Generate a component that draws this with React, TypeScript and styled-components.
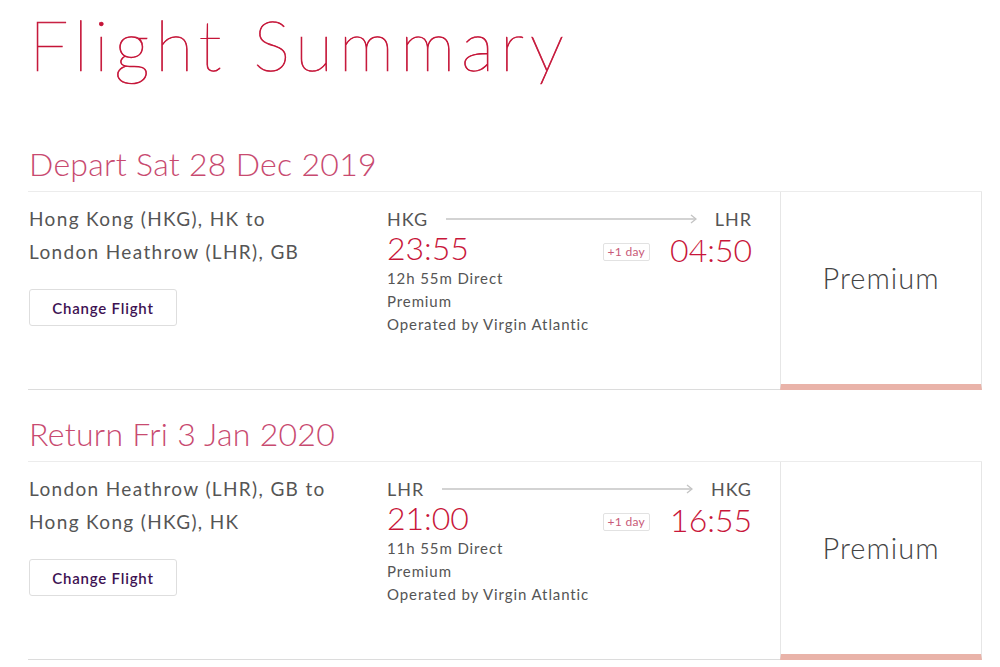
import styled, { createGlobalStyle } from "styled-components";

const GlobalStyle = createGlobalStyle`
  body {
    margin: 0;
    background: #fff;
    font-family: Lato, "Noto Sans", sans-serif;
    color: #555;
  }
`;

interface Flight {
  heading: string;
  fromName: string;
  toName: string;
  from: string;
  to: string;
  depart: string;
  arrive: string;
  duration: string;
}

const flights: Flight[] = [
  {
    heading: "Depart Sat 28 Dec 2019",
    fromName: "Hong Kong (HKG), HK to",
    toName: "London Heathrow (LHR), GB",
    from: "HKG",
    to: "LHR",
    depart: "23:55",
    arrive: "04:50",
    duration: "12h 55m Direct",
  },
  {
    heading: "Return Fri 3 Jan 2020",
    fromName: "London Heathrow (LHR), GB to",
    toName: "Hong Kong (HKG), HK",
    from: "LHR",
    to: "HKG",
    depart: "21:00",
    arrive: "16:55",
    duration: "11h 55m Direct",
  },
];

export default function App() {
  return <>
    <GlobalStyle />
    <Page>
      <Title>Flight Summary</Title>
      {flights.map(f => <FlightSection key={f.heading} flight={f} />)}
    </Page>
  </>;
}

function FlightSection({ flight }: { flight: Flight }) {
  return <Section>
    <Heading>{flight.heading}</Heading>
    <Card>
      <Route>
        <RouteLine>{flight.fromName}</RouteLine>
        <RouteLine>{flight.toName}</RouteLine>
        <ChangeButton>Change Flight</ChangeButton>
      </Route>
      <Details>
        <Airports>
          <Code>{flight.from}</Code>
          <Arrow>
            <svg width="100%" height="10" preserveAspectRatio="none" viewBox="0 0 100 10">
              <line x1="0" y1="5" x2="99.5" y2="5" stroke="#c4c4c4" strokeWidth="1.3" vectorEffect="non-scaling-stroke" />
            </svg>
            <ArrowHead width="7" height="10" viewBox="0 0 7 10">
              <path d="M1 1 L6 5 L1 9" fill="none" stroke="#c4c4c4" strokeWidth="1.3" />
            </ArrowHead>
          </Arrow>
          <Code>{flight.to}</Code>
        </Airports>
        <Times>
          <Time>{flight.depart}</Time>
          <ArriveGroup>
            <DayBadge>+1 day</DayBadge>
            <Time $late>{flight.arrive}</Time>
          </ArriveGroup>
        </Times>
        <Info>{flight.duration}</Info>
        <Info>Premium</Info>
        <Info>Operated by Virgin Atlantic</Info>
      </Details>
      <CabinBox>
        <CabinName>Premium</CabinName>
      </CabinBox>
    </Card>
  </Section>;
}

const Page = styled.div`
  padding: 2px 18px 0 28px;
`;

const Title = styled.h1`
  margin: 0 0 0 1px;
  font-family: Lato, sans-serif;
  font-weight: 100;
  font-size: 70px;
  line-height: 84px;
  color: #c51538;
  letter-spacing: 5.8px;
  -webkit-text-stroke: 0.7px #c51538;
`;

const Section = styled.section`
  display: flex;
  flex-direction: column;
`;

const Heading = styled.h2`
  margin: 56px 0 0 1px;
  padding-bottom: 5px;
  font-weight: 300;
  font-size: 32px;
  line-height: 44px;
  color: #c84a70;
  letter-spacing: 0.3px;
  ${Section} + ${Section} & {
    margin-top: 22px;
  }
`;

const Card = styled.div`
  display: grid;
  grid-template-columns: 359px 1fr 202px;
  box-sizing: border-box;
  height: 199px;
  border-top: 1px solid #ececec;
  border-bottom: 1px solid #dcdcdc;
`;

const Route = styled.div`
  display: flex;
  flex-direction: column;
  align-items: flex-start;
  padding-top: 10px;
  padding-left: 1px;
`;

const RouteLine = styled.div`
  font-size: 19px;
  line-height: 33px;
  color: #555;
  letter-spacing: 1.35px;
`;

const ChangeButton = styled.button`
  margin-top: 21px;
  width: 148px;
  height: 37px;
  background: #fff;
  border: 1px solid #dedede;
  border-radius: 3px;
  font-family: Lato, sans-serif;
  font-weight: 600;
  font-size: 15px;
  color: #3d1152;
  letter-spacing: 0.8px;
`;

const Details = styled.div`
  display: flex;
  flex-direction: column;
  padding: 17px 28px 0 0;
`;

const Airports = styled.div`
  display: flex;
  align-items: center;
  gap: 18px;
`;

const Code = styled.span`
  font-size: 18px;
  line-height: 20px;
  color: #555;
  letter-spacing: 1px;
`;

const Arrow = styled.div`
  flex: 1;
  display: flex;
  align-items: center;
  position: relative;
`;

const ArrowHead = styled.svg`
  position: absolute;
  right: 0;
  top: 0;
`;

const Times = styled.div`
  display: flex;
  justify-content: space-between;
  align-items: flex-start;
  min-height: 38px;
`;

const Time = styled.span<{ $late?: boolean }>`
  font-weight: 300;
  font-size: 32px;
  line-height: ${p => (p.$late ? "35px" : "38px")};
  color: #c8163a;
`;

const ArriveGroup = styled.div`
  display: flex;
  align-items: center;
  gap: 20px;
  margin-top: 3px;
`;

const DayBadge = styled.span`
  margin-top: 4px;
  border: 1px solid #e2e2e2;
  border-radius: 2px;
  padding: 0 4px;
  font-size: 12px;
  line-height: 16px;
  color: #c85a78;
  letter-spacing: 0.3px;
`;

const Info = styled.div`
  font-size: 15px;
  line-height: 23px;
  color: #555;
  letter-spacing: 0.9px;
`;

const CabinBox = styled.div`
  display: flex;
  align-items: center;
  justify-content: center;
  box-sizing: border-box;
  border-left: 1px solid #e6e6e6;
  border-right: 1px solid #e6e6e6;
  border-bottom: 6px solid #e9b3a9;
  margin-bottom: -1px;
`;

const CabinName = styled.span`
  font-weight: 300;
  font-size: 29px;
  color: #444;
  margin-top: -22px;
  letter-spacing: 1px;
`;
